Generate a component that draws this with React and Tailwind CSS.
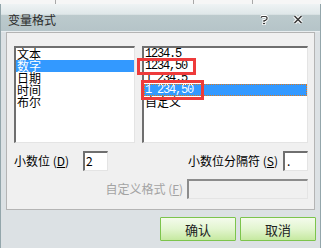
import React from "react";

const font = { fontFamily: '"Noto Sans CJK SC", "Noto Sans", sans-serif' };

const leftItems = ["文本", "数字", "日期", "时间", "布尔"];
const rightItems = ["1234.5", "1234,50", "1 234.5", "1 234,50", "自定义"];

function HelpIcon() {
  return (
    <svg width="10" height="10" viewBox="0 0 10 10">
      <path d="M2 2.5 L3 1.5 H7 L8 2.5 V4 L6.5 5.5 H5 V7" fill="none" stroke="#fff" strokeWidth="3" />
      <path d="M2 2.5 L3 1.5 H7 L8 2.5 V4 L6.5 5.5 H5 V7" fill="none" stroke="#3a3a3a" strokeWidth="1.2" />
      <rect x="3.6" y="7.6" width="2.8" height="2" fill="#3a3a3a" stroke="#fff" strokeWidth="0.8" />
    </svg>
  );
}

function CloseIcon() {
  return (
    <svg width="10" height="9" viewBox="0 0 10 9">
      <path d="M1.5 1 L8.5 8 M8.5 1 L1.5 8" stroke="#fff" strokeWidth="3.6" />
      <path d="M1.5 1 L8.5 8 M8.5 1 L1.5 8" stroke="#3a3a3a" strokeWidth="1.6" />
    </svg>
  );
}

function Sunken({ className, children, disabled }) {
  return (
    <div
      className={`border-t-2 border-l-2 border-r border-b border-t-[#6f6f6f] border-l-[#6f6f6f] border-r-[#e4e4e4] border-b-[#e4e4e4] ${
        disabled ? "bg-[#f0f0f0]" : "bg-white"
      } ${className}`}
    >
      {children}
    </div>
  );
}

export default function App() {
  return (
    <div className="w-[321px] h-[248px] bg-[#f6f6f6] text-[12px] leading-[12px] text-black overflow-hidden" style={font}>
      {/* sheet behind the dialog */}
      <div className="flex h-[4px]">
        <div className="w-[56px] border-r border-[#a8a8a8]" />
        <div className="w-[138px] border-r border-[#a8a8a8]" />
        <div className="w-[59px] border-r border-[#a8a8a8]" />
        <div className="flex-1" />
      </div>

      <div className="flex flex-col h-[244px] border-x border-[#93a6ab] bg-[#dce1e4]">
        {/* title bar */}
        <div className="h-[27px] flex items-center pl-[7px] pr-[16px] bg-[linear-gradient(to_bottom,#eef3f4_0%,#dfe7e9_38%,#bccacd_42%,#b5c4c8_100%)]">
          <span className="text-[#2b2b2b] text-[12px] mt-[5px]">变量格式</span>
          <div className="ml-auto flex items-center gap-[24px] mt-[4px] mr-[1px]">
            <HelpIcon />
            <CloseIcon />
          </div>
        </div>

        <div className="h-[1px] bg-[#e9eef0]" />

        {/* body */}
        <div className="px-[5px]">
          <div className="h-[178px] border border-[#b4b4b4] bg-[#f0f0f0] pt-[13px] pl-[7px] pr-[6px]">
            <div className="flex gap-[7px] h-[97px]">
              <Sunken className="w-[121px] h-full">
                {leftItems.map((t, i) => (
                  <div
                    key={t}
                    className={`h-[12px] pl-[1px] ${i === 1 ? "bg-[#3399ff] text-white" : ""}`}
                  >
                    {t}
                  </div>
                ))}
              </Sunken>
              <Sunken className="flex-1 h-full relative">
                {rightItems.map((t, i) => (
                  <div
                    key={t}
                    className={`h-[12px] pl-[1px] whitespace-pre ${
                      i < 4 ? "font-['Liberation_Mono',monospace] tracking-[-1.2px] leading-[13px]" : ""
                    } ${
                      i === 3 ? "bg-[#3399ff] text-white outline outline-1 outline-dotted outline-[#e07a1a] -outline-offset-1" : ""
                    }`}
                  >
                    {t}
                  </div>
                ))}
                <div className="absolute left-[-7px] top-[10px] w-[59px] h-[17px] border-[3px] border-[#ee3b3b]" />
                <div className="absolute left-[-3px] top-[32px] w-[63px] h-[20px] border-[3px] border-[#ee3b3b]" />
              </Sunken>
            </div>

            <div className="flex items-center h-[20px] mt-[8px]">
              <span className="w-[69px]">
                小数位 (<span className="underline">D</span>)
              </span>
              <Sunken className="w-[25px] h-[20px] pl-[1px] pt-[2px]">2</Sunken>
              <span className="ml-auto mr-[5px]">
                小数位分隔符 (<span className="underline">S</span>)
              </span>
              <Sunken className="w-[25px] h-[20px] pl-[2px] pt-[2px]">.</Sunken>
            </div>

            <div className="flex items-center justify-end h-[20px] mt-[8px]">
              <span className="text-[#a3a3a3] mr-[4px]">
                自定义格式 (<span className="underline">F</span>)
              </span>
              <Sunken disabled className="w-[121px] h-[20px] border-t-[#8c8c8c] border-l-[#8c8c8c]" />
            </div>
          </div>
        </div>

        {/* buttons */}
        <div className="flex justify-end gap-[4px] pr-[4px] mt-[7px]">
          {["确认", "取消"].map((t) => (
            <button
              key={t}
              className="w-[76px] h-[24px] border border-[#7cc44c] rounded-[1px] bg-[linear-gradient(to_bottom,#f4fbec_0%,#e2f5cf_50%,#c6e9a0_100%)] text-[#222] text-[13px] leading-[13px] flex items-center justify-center"
            >
              {t}
            </button>
          ))}
        </div>
      </div>
    </div>
  );
}
